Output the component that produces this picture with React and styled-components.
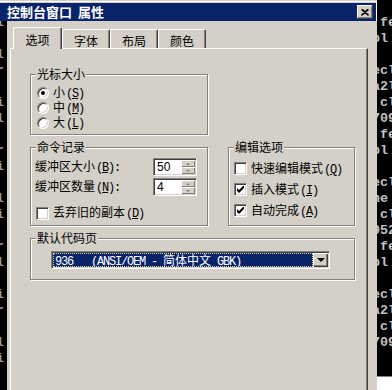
import React from "react";
import styled, { createGlobalStyle } from "styled-components";

const FACE = "#d4d0c8";
const SHADOW = "#808080";
const DARK = "#404040";
const NAVY = "#0a246a";

const GlobalStyle = createGlobalStyle`
  html, body {
    margin: 0;
    padding: 0;
    background: #000;
  }
  body {
    width: 392px;
    height: 390px;
    overflow: hidden;
    font-family: "Noto Sans CJK SC", sans-serif;
    font-size: 12px;
    color: #000;
  }
`;

const Screen = styled.div`
  display: flex;
  width: 392px;
  height: 390px;
  overflow: hidden;
  background: #000;
`;

const Dialog = styled.div`
  width: 377px;
  flex: none;
  display: flex;
  flex-direction: column;
  box-sizing: border-box;
  padding-top: 3px;
  background: ${FACE};
  box-shadow: inset 0 1px 0 ${FACE}, inset 0 2px 0 #fff, inset -1px 0 0 #fff;
`;

const TitleBar = styled.div`
  height: 18px;
  margin-right: 1px;
  display: flex;
  align-items: center;
  justify-content: space-between;
  padding: 0 3px 0 7px;
  background: ${NAVY};
  color: #fff;
  font-weight: 700;
  font-size: 13px;
  line-height: 18px;
  white-space: pre;
`;

const CloseButton = styled.div`
  width: 16px;
  height: 14px;
  box-sizing: border-box;
  display: flex;
  align-items: center;
  justify-content: center;
  background: ${FACE};
  box-shadow: inset -1px -1px 0 ${DARK}, inset 1px 1px 0 #fff,
    inset -2px -2px 0 ${SHADOW};
`;

const Body = styled.div`
  flex: 1;
  display: flex;
  min-height: 0;
`;

const ConsoleEdge = styled.div`
  width: 7px;
  flex: none;
  background: #000;
  overflow: hidden;
`;

const Main = styled.div`
  flex: 1;
  display: flex;
  flex-direction: column;
  padding: 6px 9px 0 3px;
  background: ${FACE};
`;

const TabStrip = styled.div`
  height: 21px;
  display: flex;
  align-items: flex-end;
  padding-left: 3px;
`;

const Tab = styled.div`
  box-sizing: border-box;
  width: ${(p) => (p.$active ? 49 : 48)}px;
  height: ${(p) => (p.$active ? 22 : 19)}px;
  margin-bottom: ${(p) => (p.$active ? -1 : 0)}px;
  padding-top: ${(p) => (p.$active ? 5 : 4)}px;
  position: ${(p) => (p.$active ? "relative" : "static")};
  z-index: ${(p) => (p.$active ? 1 : "auto")};
  text-align: center;
  line-height: 14px;
  background: ${FACE};
  border-top: 1px solid #fff;
  border-left: 1px solid #fff;
  border-right: 1px solid ${DARK};
  box-shadow: inset -1px 0 0 ${SHADOW};
  border-radius: 2px 2px 0 0;
`;

const Panel = styled.div`
  flex: 1;
  border-top: 1px solid #fff;
  border-left: 1px solid #fff;
  border-right: 1px solid ${DARK};
  box-shadow: inset -1px 0 0 ${SHADOW};
  padding: 25px 0 0 19px;
`;

const Groups = styled.div`
  display: grid;
  grid-template-columns: 178px 127px;
  column-gap: 20px;
  row-gap: 12px;
`;

const GroupBox = styled.div`
  box-sizing: border-box;
  grid-column: ${(p) => p.$col || "auto"};
  border: 1px solid ${SHADOW};
  box-shadow: inset 1px 1px 0 #fff, 1px 1px 0 #fff;
  padding-bottom: ${(p) => p.$pb}px;
`;

const Legend = styled.div`
  width: fit-content;
  margin: -8px 0 0 5px;
  padding: 0 1px;
  line-height: 14px;
  background: ${FACE};
`;

const List = styled.div`
  margin-top: ${(p) => p.$top}px;
  display: flex;
  flex-direction: column;
`;

const OptionRow = styled.div`
  display: flex;
  align-items: center;
  gap: 4px;
  height: ${(p) => p.$h}px;
  padding-left: ${(p) => p.$indent}px;
  margin-top: ${(p) => p.$gap || 0}px;
  line-height: 14px;
  white-space: nowrap;
`;

const Latin = styled.span`
  font-family: "Liberation Mono", monospace;
  font-size: 12px;
  letter-spacing: -1.2px;
  margin-left: 1px;
`;

const Radio = styled.span`
  width: 12px;
  height: 12px;
  flex: none;
  box-sizing: border-box;
  border-radius: 50%;
  border: 1px solid;
  border-color: ${SHADOW} #fff #fff ${SHADOW};
  box-shadow: inset 1px 1px 0 ${DARK}, inset -1px -1px 0 ${FACE};
  background: #fff;
  display: flex;
  align-items: center;
  justify-content: center;

  &::after {
    content: "";
    width: 4px;
    height: 4px;
    border-radius: 50%;
    background: ${(p) => (p.$on ? "#000" : "transparent")};
  }
`;

const CheckBox = styled.span`
  width: 13px;
  height: 13px;
  flex: none;
  box-sizing: border-box;
  border: 1px solid;
  border-color: ${SHADOW} #fff #fff ${SHADOW};
  box-shadow: inset 1px 1px 0 ${DARK}, inset -1px -1px 0 ${FACE};
  background: #fff;
  display: flex;
  align-items: center;
  justify-content: center;
`;

const SpinRow = styled.div`
  display: flex;
  align-items: center;
  height: 20px;
  padding-left: 4px;
  white-space: nowrap;
`;

const SpinLabel = styled.span`
  width: 118px;
  line-height: 14px;
`;

const Spin = styled.div`
  width: 44px;
  height: 18px;
  box-sizing: border-box;
  display: flex;
  border: 1px solid;
  border-color: ${SHADOW} #fff #fff ${SHADOW};
  box-shadow: inset 1px 1px 0 ${DARK}, inset -1px -1px 0 ${FACE};
  padding: 1px;
  background: #fff;
`;

const SpinValue = styled.span`
  flex: 1;
  padding-left: 2px;
  font-family: "Liberation Sans", sans-serif;
  font-size: 12px;
  line-height: 14px;
`;

const SpinButtons = styled.div`
  width: 14px;
  display: flex;
  flex-direction: column;
`;

const SpinButton = styled.div`
  flex: 1;
  background: ${FACE};
  box-shadow: inset 1px 1px 0 #fff, inset -1px -1px 0 ${SHADOW};
  display: flex;
  align-items: center;
  justify-content: center;

  &::after {
    content: "";
    border-left: 2px solid transparent;
    border-right: 2px solid transparent;
    ${(p) =>
      p.$up
        ? `border-bottom: 2px solid ${SHADOW};`
        : `border-top: 2px solid ${SHADOW};`}
  }
`;

const Combo = styled.div`
  margin: 6px 0 0 20px;
  width: 279px;
  height: 18px;
  box-sizing: border-box;
  display: flex;
  border: 1px solid;
  border-color: ${SHADOW} #fff #fff ${SHADOW};
  box-shadow: inset 1px 1px 0 ${DARK}, inset -1px -1px 0 ${FACE};
  padding: 1px;
  background: #fff;
`;

const ComboValue = styled.div`
  flex: 1;
  box-sizing: border-box;
  background: ${NAVY};
  border: 1px dotted #e9dca0;
  color: #fff;
  line-height: 12px;
  white-space: pre;
  overflow: hidden;
`;

const Cjk = styled.span`
  font-family: "Noto Sans CJK SC", sans-serif;
  font-size: 12px;
  letter-spacing: 0;
`;

const ComboButton = styled.div`
  width: 15px;
  flex: none;
  background: ${FACE};
  box-shadow: inset 1px 1px 0 #fff, inset -1px -1px 0 ${DARK},
    inset -2px -2px 0 ${SHADOW};
  display: flex;
  align-items: center;
  justify-content: center;

  &::after {
    content: "";
    border-left: 4px solid transparent;
    border-right: 4px solid transparent;
    border-top: 4px solid #000;
  }
`;

const Console = styled.div`
  flex: 1;
  display: flex;
  flex-direction: column;
  overflow: hidden;
  background: #000;
`;

const ConsoleLines = styled.div`
  margin: ${(p) => p.$top}px 0 0 ${(p) => p.$shift}px;
`;

const ConsoleLine = styled.div`
  height: 16px;
  line-height: 16px;
  font-family: "Liberation Mono", monospace;
  font-weight: 700;
  font-size: 13.33px;
  color: ${(p) => p.$tone || "#c0c0c0"};
  white-space: pre;
`;

const ConsoleFoot = styled.div`
  margin-top: auto;
  height: 13px;
  background: #fff;
  border-top: 1px solid ${SHADOW};
`;

function Key({ k, after = "" }) {
  return (
    <Latin>
      (<u>{k}</u>){after}
    </Latin>
  );
}

function Tick() {
  return (
    <svg width="7" height="7" viewBox="0 0 7 7">
      <polygon points="0,2 2,4 7,-1 7,2 2,7 0,5" fill="#000" />
    </svg>
  );
}

const rightLines = [
  "", " fe", "bl", "", "ecl", "a2l", " cl", "709", " fe", "bl", "",
  "ecl", "ne", " cl", "952", " fe", "bl", "", "ecl", "a2l", " cl", "709",
];

const leftLines = [
  "i", "", "l", "r", "", "i", "l", "", "r", "i", "", "l", "i", "",
  "r", "l", "", "i", "r", "", "l", "i", "",
];

const tabs = ["选项", "字体", "布局", "颜色"];

const sizes = [
  { label: "小", key: "S", on: true },
  { label: "中", key: "M", on: false },
  { label: "大", key: "L", on: false },
];

const editOptions = [
  { label: "快速编辑模式", key: "Q", on: false },
  { label: "插入模式", key: "I", on: true },
  { label: "自动完成", key: "A", on: true },
];

export default function App() {
  return (
    <>
      <GlobalStyle />
      <Screen>
        <Dialog>
          <TitleBar>
            <span>控制台窗口  属性</span>
            <CloseButton>
              <svg width="8" height="7" viewBox="0 0 8 7">
                <path
                  d="M0.5 0.5 L7.5 6.5 M7.5 0.5 L0.5 6.5 M1.5 0.5 L7.5 6 M6.5 0.5 L0.5 6"
                  stroke="#000"
                  strokeWidth="1.2"
                />
              </svg>
            </CloseButton>
          </TitleBar>
          <Body>
            <ConsoleEdge>
              <ConsoleLines $top={-6} $shift={-4}>
                {leftLines.map((l, i) => (
                  <ConsoleLine key={i} $tone="#9a9a9a">
                    {l}
                  </ConsoleLine>
                ))}
              </ConsoleLines>
            </ConsoleEdge>
            <Main>
              <TabStrip>
                {tabs.map((t, i) => (
                  <Tab key={t} $active={i === 0}>
                    {t}
                  </Tab>
                ))}
              </TabStrip>
              <Panel>
                <Groups>
                  <GroupBox $col="1" $pb={4}>
                    <Legend>光标大小</Legend>
                    <List $top={4}>
                      {sizes.map((s) => (
                        <OptionRow key={s.key} $h={15} $indent={6}>
                          <Radio $on={s.on} />
                          <span>
                            {s.label}
                            <Key k={s.key} />
                          </span>
                        </OptionRow>
                      ))}
                    </List>
                  </GroupBox>
                  <GroupBox $col="1" $pb={4}>
                    <Legend>命令记录</Legend>
                    <List $top={3}>
                      <SpinRow>
                        <SpinLabel>
                          缓冲区大小
                          <Key k="B" after=":" />
                        </SpinLabel>
                        <Spin>
                          <SpinValue>50</SpinValue>
                          <SpinButtons>
                            <SpinButton $up />
                            <SpinButton />
                          </SpinButtons>
                        </Spin>
                      </SpinRow>
                      <SpinRow>
                        <SpinLabel>
                          缓冲区数量
                          <Key k="N" after=":" />
                        </SpinLabel>
                        <Spin>
                          <SpinValue>4</SpinValue>
                          <SpinButtons>
                            <SpinButton $up />
                            <SpinButton />
                          </SpinButtons>
                        </Spin>
                      </SpinRow>
                      <OptionRow $h={16} $indent={5} $gap={8}>
                        <CheckBox />
                        <span>
                          丢弃旧的副本
                          <Key k="D" />
                        </span>
                      </OptionRow>
                    </List>
                  </GroupBox>
                  <GroupBox $col="2" $pb={0}>
                    <Legend>编辑选项</Legend>
                    <List $top={4}>
                      {editOptions.map((o) => (
                        <OptionRow key={o.key} $h={21} $indent={5}>
                          <CheckBox>{o.on && <Tick />}</CheckBox>
                          <span>
                            {o.label}
                            <Key k={o.key} />
                          </span>
                        </OptionRow>
                      ))}
                    </List>
                  </GroupBox>
                  <GroupBox $col="1 / span 2" $pb={10}>
                    <Legend>默认代码页</Legend>
                    <Combo>
                      <ComboValue>
                        <Latin>
                          {"936   (ANSI/OEM - "}
                          <Cjk>简体中文</Cjk>
                          {" GBK)"}
                        </Latin>
                      </ComboValue>
                      <ComboButton />
                    </Combo>
                  </GroupBox>
                </Groups>
              </Panel>
            </Main>
          </Body>
        </Dialog>
        <Console>
          <ConsoleLines $top={-1} $shift={-5}>
            {rightLines.map((l, i) => (
              <ConsoleLine key={i}>{l}</ConsoleLine>
            ))}
          </ConsoleLines>
          <ConsoleFoot />
        </Console>
      </Screen>
    </>
  );
}
